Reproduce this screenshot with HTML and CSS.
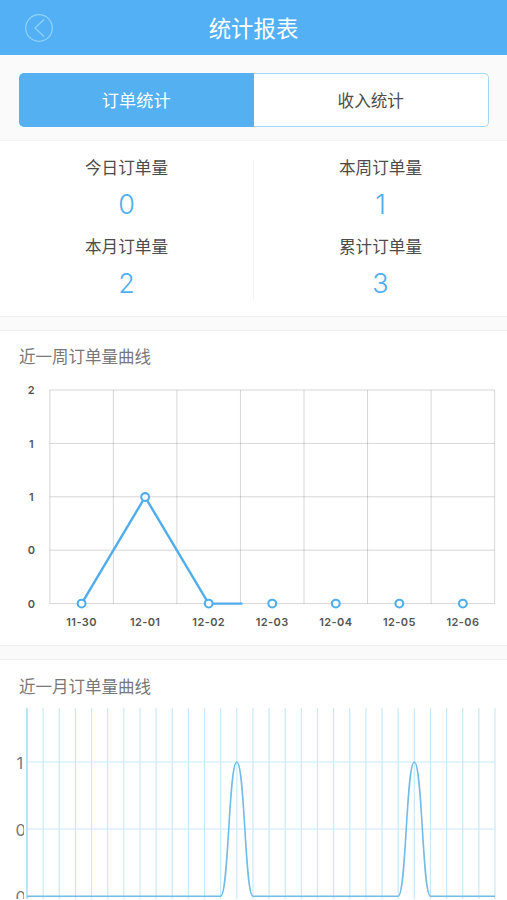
FILE: index.html
```html
<!DOCTYPE html>
<html lang="zh-CN">
<head>
  <meta charset="UTF-8" />
  <meta name="viewport" content="width=device-width, initial-scale=1" />
  <title>统计报表</title>
  <link rel="stylesheet" href="styles.css">
</head>
<body>

  <!-- Header -->
  <header class="header">
    <button class="back" aria-label="返回">
      <svg width="28" height="28" viewBox="0 0 28 28">
        <circle cx="14" cy="14" r="13.3" />
        <path d="M19 5.5L10 14l9 8.5" />
      </svg>
    </button>
    <h1>统计报表</h1>
  </header>

  <!-- Tabs -->
  <nav class="tabs">
    <button class="tab active">订单统计</button>
    <button class="tab">收入统计</button>
  </nav>

  <!-- Totals -->
  <section class="totals">
    <div class="column">
      <div class="total"><p>今日订单量</p><strong>0</strong></div>
      <div class="total"><p>本月订单量</p><strong>2</strong></div>
    </div>
    <div class="column">
      <div class="total"><p>本周订单量</p><strong>1</strong></div>
      <div class="total"><p>累计订单量</p><strong>3</strong></div>
    </div>
  </section>

  <section class="card week">
    <h2>近一周订单量曲线</h2>
    <svg class="week-chart" width="507" height="260" viewBox="0 380 507 260">
      <g id="weekGrid" class="week-grid"></g>
      <path class="week-line" d="M81.6 603.6L145.1 497L208.6 603.6H242.5" />
      <g id="weekDots" class="week-dots"></g>
      <g class="week-values">
        <text x="31.3" y="394.2">2</text>
        <text x="31.3" y="447.6">1</text>
        <text x="31.3" y="501">1</text>
        <text x="31.3" y="554.4">0</text>
        <text x="31.3" y="607.8">0</text>
      </g>
      <g id="weekDates" class="week-dates"></g>
    </svg>
  </section>

  <section class="card month">
    <h2>近一月订单量曲线</h2>
    <div class="month-body">
      <div class="month-values">
        <span>1</span>
        <span>0</span>
        <span>0</span>
      </div>
      <svg class="month-chart" width="483" height="191" viewBox="24 708 483 191">
        <g id="monthGrid" class="month-grid"></g>
        <path class="month-axis" d="M27 708V899" />
        <path id="monthLine" class="month-line" />
      </svg>
    </div>
  </section>

<script>
  const dates = ['11-30', '12-01', '12-02', '12-03', '12-04', '12-05', '12-06'];
  const weekOrders = [0, 1, 0, 0, 0, 0, 0];

  // week chart
  let grid = '';
  for (let i = 0; i <= 7; i++) {
    grid += `<path d="M${49.8 + i * 63.55} 390V603.6" />`;
  }
  for (let i = 0; i <= 4; i++) {
    grid += `<path d="M49.8 ${390 + i * 53.4}H494.6" />`;
  }
  document.getElementById('weekGrid').innerHTML = grid;

  document.getElementById('weekDots').innerHTML = weekOrders.map((n, i) =>
    `<circle cx="${81.6 + i * 63.55}" cy="${603.6 - n * 106.6}" r="3.9" />`).join('');
  document.getElementById('weekDates').innerHTML = dates.map((d, i) =>
    `<text x="${81.6 + i * 63.55}" y="626.2">${d}</text>`).join('');

  // month chart, 30 days with orders on two of them
  const step = 468 / 29;
  let monthGrid = '';
  for (let i = 1; i < 30; i++) {
    monthGrid += `<path d="M${27 + i * step} 708V899" />`;
  }
  monthGrid += '<path d="M27 762H495" /><path d="M27 829H495" />';
  document.getElementById('monthGrid').innerHTML = monthGrid;

  let line = 'M27 896.2';
  [13, 24].forEach(day => {
    const x = 27 + day * step;
    line += `H${x - step}C${x - step / 2} 896.2 ${x - step / 2} 762 ${x} 762`;
    line += `S${x + step / 2} 896.2 ${x + step} 896.2`;
  });
  document.getElementById('monthLine').setAttribute('d', line + 'H495');
</script>

</body>
</html>
```
FILE: styles.css
```css
* {
  box-sizing: border-box;
}

body {
  margin: 0;
  height: 900px;
  overflow: hidden;
  font-family: Inter, "Noto Sans CJK SC", sans-serif;
  background-color: #fafafa;
  color: #4c4c4c;
}

h1, h2, p {
  margin: 0;
  font-weight: 400;
}

button {
  padding: 0;
  border: none;
  font-family: inherit;
}

.header {
  display: grid;
  grid-template-columns: 78px 1fr 78px;
  align-items: center;
  height: 55px;
  background-color: #54b0f5;
  color: white;
}

.header h1 {
  padding-top: 2px;
  font-size: 22.4px;
  line-height: 53px;
  text-align: center;
}

.back {
  width: 28px;
  height: 28px;
  margin: 1px 0 0 25px;
  background: none;
}

.back svg {
  display: block;
  fill: none;
  stroke: #8fd3fb;
  stroke-width: 1.2;
}

.tabs {
  display: flex;
  height: 86px;
  padding: 18px 18px 14px 19px;
  border-bottom: 1px solid #f4f4f4;
}

.tab {
  flex: 1;
  height: 54px;
  border: 1px solid #a5d7f7;
  border-left: none;
  border-radius: 0 5px 5px 0;
  background-color: white;
  color: #4c4c4c;
  font-size: 16.6px;
}

.tab.active {
  padding-bottom: 2px;
  border: none;
  border-radius: 5px 0 0 5px;
  background-color: #54b0f0;
  color: white;
  font-size: 17.2px;
}

.totals {
  display: flex;
  height: 176px;
  padding: 19px 0 16px;
  border-bottom: 1px solid #f1f1f1;
  background-color: white;
}

.column {
  flex: 1;
}

.column:first-child {
  border-right: 1px solid #f3f3f3;
}

.total {
  height: 79px;
  text-align: center;
}

.total p {
  font-size: 16.6px;
  line-height: 16px;
}

.total strong {
  display: block;
  color: #50adf0;
  font-size: 27px;
  font-weight: 300;
  line-height: 58px;
}

.card {
  margin-top: 13px;
  border-top: 1px solid #f1f1f1;
  background-color: white;
}

.card h2 {
  height: 49px;
  padding-left: 19px;
  color: #777;
  font-size: 16.5px;
  line-height: 53px;
}

.week {
  height: 316px;
  border-bottom: 1px solid #f1f1f1;
}

.week-chart {
  display: block;
}

.week-grid {
  stroke: #000;
  stroke-opacity: 0.16;
  stroke-width: 1;
}

.week-line {
  fill: none;
  stroke: #50adeb;
  stroke-width: 2.4;
}

.week-dots {
  fill: white;
  stroke: #50adeb;
  stroke-width: 2.1;
}

.week-values, .week-dates {
  fill: #555;
  font-size: 11px;
  font-weight: 600;
  text-anchor: middle;
}

.week-dates {
  letter-spacing: 0.4px;
}

.month {
  height: 241px;
}

.month h2 {
  height: 48px;
  line-height: 55px;
}

.month-body {
  display: flex;
  height: 191px;
  overflow: hidden;
}

/* the value column is narrow, so wide digits are cut at its right edge */
.month-values {
  width: 24px;
  height: 191px;
  padding: 42px 0 0 15.5px;
  overflow: hidden;
  color: #777;
  font-size: 16.5px;
  font-weight: 400;
}

.month-values span {
  display: block;
  height: 67px;
  line-height: 26px;
}

.month-values span:first-child {
  padding-left: 1px;
}

.month-chart {
  display: block;
  flex: none;
}

.month-grid {
  stroke: #c9e9fa;
  stroke-width: 1.2;
}

.month-axis {
  stroke: #a9ddf8;
  stroke-width: 1.6;
}

.month-line {
  fill: none;
  stroke: #72bce8;
  stroke-width: 1.6;
}
```
